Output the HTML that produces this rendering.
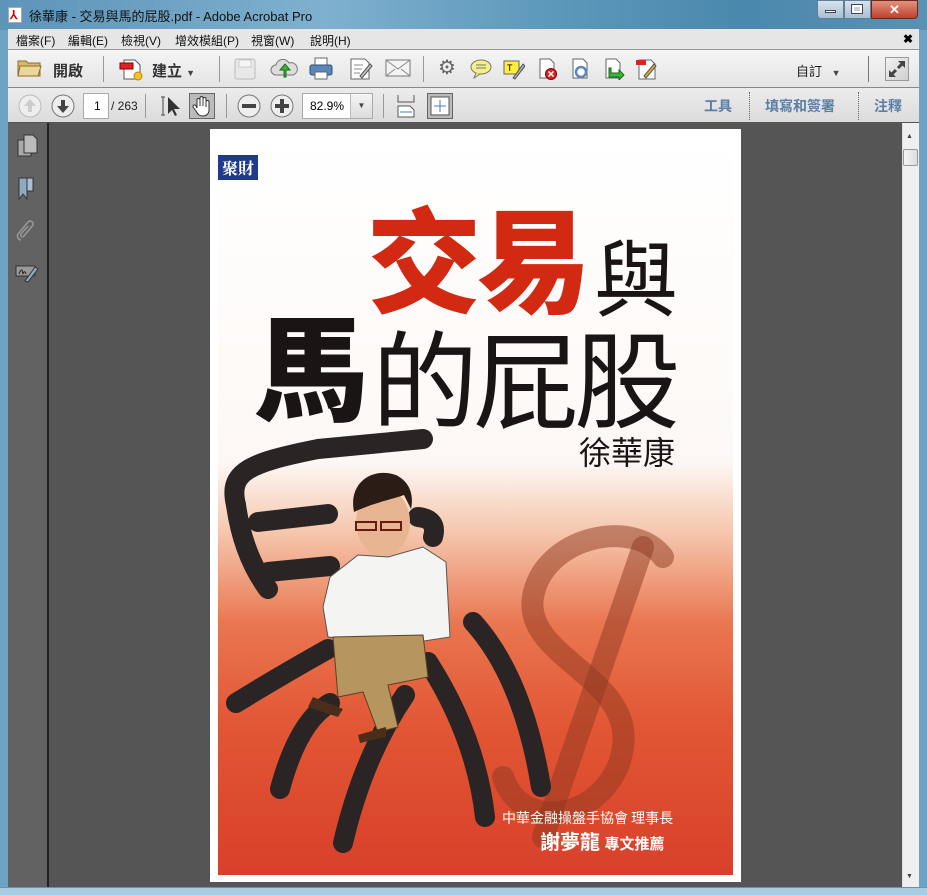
<!DOCTYPE html>
<html><head><meta charset="utf-8">
<style>
*{margin:0;padding:0;box-sizing:border-box}
body{width:927px;height:895px;overflow:hidden;background:#6fa3c4;font-family:"Liberation Sans","Noto Sans CJK TC",sans-serif;position:relative}
.a{position:absolute}
.cj{font-family:"Noto Sans CJK TC",sans-serif;line-height:1;white-space:nowrap}
</style></head><body>
<!-- title bar -->
<div class="a" style="left:0;top:0;width:927px;height:30px;background:linear-gradient(90deg,#5d94b8 0%,#7fb0cf 35%,#5c98ba 60%,#4b88ad 80%,#5a91b3 100%)"></div>
<div class="a" style="left:8px;top:7px;width:14px;height:16px;background:#fff;border:1px solid #aaa"></div>
<div class="a" style="left:10px;top:9px;color:#c00;font-size:12px;font-weight:bold;line-height:12px">⅄</div>
<div class="a" style="left:29px;top:6px;font-size:13px;color:#111">徐華康 - 交易與馬的屁股.pdf - Adobe Acrobat Pro</div>
<div class="a" style="left:817px;top:0;width:27px;height:19px;background:linear-gradient(#d8e4ee,#a9bfd1);border:1px solid #5f7f99;border-radius:0 0 0 4px"></div>
<div class="a" style="left:825px;top:10px;width:11px;height:3px;background:#fff;border:1px solid #445"></div>
<div class="a" style="left:844px;top:0;width:27px;height:19px;background:linear-gradient(#d8e4ee,#a9bfd1);border:1px solid #5f7f99"></div>
<div class="a" style="left:852px;top:5px;width:10px;height:8px;border:2px solid #fff;outline:1px solid #445"></div>
<div class="a" style="left:871px;top:0;width:47px;height:19px;background:linear-gradient(#e0937f,#c0402a);border:1px solid #6a2a20;border-radius:0 0 4px 0;color:#fff;font-size:13px;font-weight:bold;text-align:center;line-height:17px">✕</div>
<!-- menu -->
<div class="a" style="left:8px;top:29px;width:911px;height:21px;background:#e6e6e6;border-bottom:1px solid #999"></div>
<div class="a" style="left:16px;top:32px;font-size:12px;color:#111">檔案(F)</div>
<div class="a" style="left:68px;top:32px;font-size:12px;color:#111">編輯(E)</div>
<div class="a" style="left:121px;top:32px;font-size:12px;color:#111">檢視(V)</div>
<div class="a" style="left:175px;top:32px;font-size:12px;color:#111">增效模組(P)</div>
<div class="a" style="left:251px;top:32px;font-size:12px;color:#111">視窗(W)</div>
<div class="a" style="left:310px;top:32px;font-size:12px;color:#111">說明(H)</div>
<div class="a" style="left:903px;top:32px;font-size:12px;font-weight:bold;color:#000">✖</div>
<!-- toolbar 1 -->
<div class="a" style="left:8px;top:50px;width:911px;height:38px;background:linear-gradient(#f5f5f5,#e4e4e4);border-bottom:1px solid #888"></div>
<svg class="a" style="left:17px;top:58px" width="26" height="20"><path d="M1 3h8l2 2h12v13H1z" fill="#d9b970" stroke="#8a6c2c"/><path d="M3 8h21l-3 10H1z" fill="#ecd79a" stroke="#8a6c2c"/></svg>
<div class="a" style="left:53px;top:60px;font-size:15px;font-weight:bold;color:#333">開啟</div>
<div class="a" style="left:103px;top:56px;width:1px;height:26px;background:#999"></div>
<svg class="a" style="left:119px;top:57px" width="26" height="24"><path d="M5 3h11l5 5v14H5z" fill="#fff" stroke="#555"/><rect x="1" y="6" width="13" height="6" fill="#d22" stroke="#800"/><circle cx="19" cy="19" r="4" fill="#f5c02a" stroke="#b80"/></svg>
<div class="a" style="left:152px;top:60px;font-size:15px;font-weight:bold;color:#333">建立 <span style="font-size:9px;color:#444">▼</span></div>
<div class="a" style="left:219px;top:56px;width:1px;height:26px;background:#999"></div>
<svg class="a" style="left:233px;top:57px" width="24" height="24"><rect x="2" y="2" width="20" height="20" rx="2" fill="#e8e8e8" stroke="#bbb"/><rect x="6" y="3" width="12" height="7" fill="#f6f6f6" stroke="#ccc"/></svg>
<svg class="a" style="left:270px;top:56px" width="28" height="24"><path d="M6 19a5 5 0 0 1 0-10a7 7 0 0 1 13-2a5 5 0 0 1 4 12z" fill="#ddd" stroke="#777"/><path d="M14 21v-7h-4l5-6 5 6h-4v7z" fill="#3cb63c" stroke="#186a18"/></svg>
<svg class="a" style="left:308px;top:56px" width="26" height="25"><rect x="7" y="2" width="12" height="8" fill="#fff" stroke="#666"/><rect x="2" y="9" width="22" height="10" rx="2" fill="#5a87b8" stroke="#2f4f73"/><rect x="7" y="16" width="12" height="7" fill="#fff" stroke="#666"/></svg>
<svg class="a" style="left:348px;top:56px" width="26" height="25"><path d="M3 3h14l4 4v16H3z" fill="#fff" stroke="#666"/><path d="M6 9h9M6 13h8M6 17h6" stroke="#888"/><path d="M12 20l10-12 2 2-10 12z" fill="#cbb" stroke="#555"/></svg>
<svg class="a" style="left:385px;top:59px" width="26" height="19"><rect x="1" y="1" width="24" height="16" fill="#f4f4f4" stroke="#777"/><path d="M1 1l12 9 12-9M1 17l9-7M25 17l-9-7" fill="none" stroke="#888"/></svg>
<div class="a" style="left:423px;top:56px;width:1px;height:26px;background:#999"></div>
<div class="a" style="left:438px;top:58px;font-size:20px;color:#666;line-height:20px">⚙</div>
<svg class="a" style="left:470px;top:59px" width="22" height="20"><ellipse cx="11" cy="8" rx="10" ry="7" fill="#f6f08a" stroke="#776"/><path d="M6 14l-2 5 6-4" fill="#f6f08a" stroke="#776"/><path d="M6 6h10M6 9h10" stroke="#776"/></svg>
<svg class="a" style="left:503px;top:58px" width="22" height="22"><rect x="1" y="3" width="15" height="13" fill="#ffef3a" stroke="#666"/><text x="4" y="13" font-size="9" font-family="Liberation Sans">T</text><path d="M10 20l10-14 2 2-10 13z" fill="#aaa" stroke="#555"/></svg>
<svg class="a" style="left:537px;top:58px" width="22" height="22"><path d="M3 1h10l4 4v15H3z" fill="#fff" stroke="#666"/><circle cx="14" cy="16" r="5.5" fill="#d22" stroke="#800"/><path d="M11.5 13.5l5 5M16.5 13.5l-5 5" stroke="#fff" stroke-width="1.5"/></svg>
<svg class="a" style="left:570px;top:58px" width="22" height="22"><path d="M3 1h10l4 4v15H3z" fill="#fff" stroke="#666"/><circle cx="11" cy="14" r="5" fill="none" stroke="#5a87b8" stroke-width="2.5"/></svg>
<svg class="a" style="left:603px;top:58px" width="24" height="22"><path d="M3 1h10l4 4v15H3z" fill="#fff" stroke="#666"/><path d="M8 10v5h8v-3l5 5-5 5v-3H6v-9z" fill="#3cb63c" stroke="#186a18"/></svg>
<svg class="a" style="left:635px;top:57px" width="24" height="23"><path d="M4 3h12l4 4v15H4z" fill="#fff" stroke="#666"/><rect x="1" y="3" width="10" height="5" fill="#d22"/><path d="M9 19l10-12 2 2-10 12z" fill="#e9a63a" stroke="#555"/></svg>
<div class="a" style="left:796px;top:61px;font-size:13px;color:#222">自訂 <span style="font-size:9px;color:#444;margin-left:6px">▼</span></div>
<div class="a" style="left:868px;top:56px;width:1px;height:26px;background:#777"></div>
<div class="a" style="left:885px;top:57px;width:24px;height:24px;border:1px solid #999;background:linear-gradient(135deg,#f2f2f2,#cfcfcf)"></div>
<svg class="a" style="left:885px;top:57px" width="24" height="24"><path d="M5 19l6-6M19 5l-6 6" stroke="#444" stroke-width="3"/><path d="M4 20v-7l7 7zM20 4v7l-7-7z" fill="#444"/></svg>
<!-- toolbar 2 -->
<div class="a" style="left:8px;top:88px;width:911px;height:35px;background:linear-gradient(#ececec,#dcdcdc);border-bottom:1px solid #555"></div>
<svg class="a" style="left:17px;top:93px" width="26" height="26"><circle cx="13" cy="13" r="11" fill="#eee" stroke="#bbb"/><path d="M13 6l6 7h-4v6h-4v-6H7z" fill="#ccc"/></svg>
<svg class="a" style="left:50px;top:93px" width="26" height="26"><circle cx="13" cy="13" r="11" fill="#eee" stroke="#777"/><path d="M13 20l6-7h-4V7h-4v6H7z" fill="#444"/></svg>
<div class="a" style="left:83px;top:93px;width:26px;height:26px;background:#fff;border:1px solid #aaa;font-size:12px;line-height:24px;padding-left:10px">1</div>
<div class="a" style="left:111px;top:99px;font-size:12px;color:#222">/ 263</div>
<div class="a" style="left:145px;top:94px;width:1px;height:24px;background:#999"></div>
<svg class="a" style="left:160px;top:94px" width="24" height="24"><path d="M3 3v18M1 3h4M1 21h4" stroke="#444"/><path d="M8 3v17l4-4 3 6 2-1-3-6h6z" fill="#333"/></svg>
<div class="a" style="left:189px;top:93px;width:26px;height:26px;background:#bbb;border:1px solid #666"></div>
<svg class="a" style="left:190px;top:94px" width="24" height="24"><path d="M7 14V6a1.5 1.5 0 0 1 3 0v6V4a1.5 1.5 0 0 1 3 0v8V5a1.5 1.5 0 0 1 3 0v8V8a1.5 1.5 0 0 1 3 0v8c0 4-3 6-6 6s-5-1-7-5l-3-4a1.5 1.5 0 0 1 3-1z" fill="#fff" stroke="#333"/></svg>
<div class="a" style="left:226px;top:94px;width:1px;height:24px;background:#999"></div>
<svg class="a" style="left:236px;top:93px" width="26" height="26"><circle cx="13" cy="13" r="11" fill="#eee" stroke="#777"/><rect x="6" y="11" width="14" height="4" fill="#444"/></svg>
<svg class="a" style="left:269px;top:93px" width="26" height="26"><circle cx="13" cy="13" r="11" fill="#eee" stroke="#777"/><path d="M6 11h5V6h4v5h5v4h-5v5h-4v-5H6z" fill="#444"/></svg>
<div class="a" style="left:302px;top:93px;width:71px;height:26px;background:#fff;border:1px solid #aaa;font-size:12px;line-height:24px;padding-left:7px">82.9%</div>
<div class="a" style="left:350px;top:94px;width:22px;height:24px;background:linear-gradient(#f5f5f5,#ddd);border-left:1px solid #bbb;font-size:8px;text-align:center;line-height:24px;color:#444">▼</div>
<div class="a" style="left:383px;top:94px;width:1px;height:24px;background:#999"></div>
<svg class="a" style="left:396px;top:94px" width="20" height="24"><path d="M2 1v7h16V1" fill="none" stroke="#555"/><path d="M2 12h12l4 4v7H2z" fill="#fff" stroke="#555"/><path d="M4 18h12" stroke="#4a7cc0"/></svg>
<div class="a" style="left:427px;top:93px;width:26px;height:26px;background:#bbb;border:1px solid #666"></div>
<svg class="a" style="left:430px;top:96px" width="20" height="20"><rect x="1" y="1" width="18" height="18" fill="#fff" stroke="#555"/><path d="M10 4v12M4 10h12" stroke="#4a7cc0"/></svg>
<div class="a" style="left:704px;top:96px;font-size:14px;font-weight:bold;color:#5a7ea6">工具</div>
<div class="a" style="left:749px;top:92px;height:28px;border-left:1px dotted #666"></div>
<div class="a" style="left:765px;top:96px;font-size:14px;font-weight:bold;color:#5a7ea6">填寫和簽署</div>
<div class="a" style="left:858px;top:92px;height:28px;border-left:1px dotted #666"></div>
<div class="a" style="left:874px;top:96px;font-size:14px;font-weight:bold;color:#5a7ea6">注釋</div>
<!-- workspace -->
<div class="a" style="left:8px;top:123px;width:911px;height:764px;background:#555"></div>
<div class="a" style="left:8px;top:123px;width:41px;height:764px;background:#626262;border-right:2px solid #222"></div>
<svg class="a" style="left:16px;top:133px" width="24" height="26"><rect x="2" y="7" width="13" height="16" fill="#aaa" stroke="#333"/><path d="M8 2h9l4 4v14H8z" fill="#bbb" stroke="#333"/></svg>
<svg class="a" style="left:17px;top:176px" width="20" height="26"><path d="M2 2h8v21l-4-5-4 5z" fill="#8ea9c2" stroke="#333"/><path d="M10 2h6v13h-6z" fill="#a9bfd3" stroke="#333"/></svg>
<svg class="a" style="left:15px;top:218px" width="24" height="26"><path d="M6 22a4 4 0 0 1-3-6L13 4a3 3 0 0 1 5 3L9 18a1.5 1.5 0 0 1-3-2l7-8" fill="none" stroke="#999" stroke-width="1.5"/></svg>
<svg class="a" style="left:15px;top:264px" width="24" height="20"><rect x="1" y="2" width="19" height="10" fill="#999" stroke="#333"/><path d="M4 10c2-5 3-6 4 0 1-3 2-3 3 0" fill="none" stroke="#222"/><path d="M10 17l10-14 3 2-10 13z" fill="#8ea9c2" stroke="#333"/></svg>
<!-- scrollbar -->
<div class="a" style="left:902px;top:123px;width:17px;height:764px;background:#efefef;border-left:1px solid #ddd"></div>
<div class="a" style="left:906px;top:133px;font-size:7px;color:#444">▲</div>
<div class="a" style="left:903px;top:149px;width:15px;height:17px;background:linear-gradient(90deg,#f4f4f4,#ddd);border:1px solid #999;border-radius:2px"></div>
<div class="a" style="left:906px;top:873px;font-size:7px;color:#444">▼</div>
<div class="a" style="left:0;top:887px;width:927px;height:8px;background:#a9cbe2;border-top:1px solid #6a8fb0"></div>
<!-- page -->
<div class="a" style="left:210px;top:129px;width:531px;height:753px;background:#fff"></div>
<svg class="a" style="left:218px;top:137px" width="515" height="738" viewBox="0 0 515 738">
<defs>
<linearGradient id="bg" x1="0" y1="0" x2="0" y2="1">
<stop offset="0" stop-color="#fff"/><stop offset="0.44" stop-color="#fdf8f5"/><stop offset="0.54" stop-color="#f5c4aa"/><stop offset="0.66" stop-color="#e97650"/><stop offset="0.8" stop-color="#e25634"/><stop offset="1" stop-color="#d8402a"/>
</linearGradient>
</defs>
<rect width="515" height="738" fill="url(#bg)"/>
<g fill="none" stroke="#8e3820" stroke-opacity="0.5" stroke-width="22" stroke-linecap="round" transform="translate(15,140)">
<path d="M430 280C400 240 310 260 300 320C290 380 400 400 390 470C380 540 290 560 270 500"/>
<path d="M410 270L310 560"/>
</g>
<g fill="none" stroke="#2a2424" stroke-width="20" stroke-linecap="round" stroke-linejoin="round">
<path d="M18 368C10 335 30 326 100 312L205 302"/>
<path d="M18 368Q25 418 50 452"/>
<path d="M40 385L110 377M50 435L112 429"/>
<path d="M18 566Q60 540 110 512"/>
<path d="M200 380Q220 382 215 400"/>
<path d="M62 652Q80 585 112 566"/>
<path d="M125 706Q145 620 187 558"/>
<path d="M267 680Q258 600 210 525"/>
<path d="M323 650Q305 540 255 485"/>
</g>
<path d="M112 440L140 418L170 420L205 410L228 425L232 500L180 508L110 500L105 470Z" fill="#f4f4f2" stroke="#555"/>
<path d="M115 500L205 498L210 540L170 548L180 590L160 595L145 555L120 560Z" fill="#b6955f" stroke="#5a4222"/>
<path d="M95 560L125 572L120 580L90 570ZM140 598L168 590L168 600L142 606Z" fill="#4a2d1a"/>
<ellipse cx="165" cy="385" rx="27" ry="34" fill="#e8b593"/>
<path d="M136 375C130 345 155 330 178 338C192 345 196 358 193 372L186 358C175 362 155 366 136 375Z" fill="#2b1d15"/>
<path d="M138 385h20v8h-20zM163 385h20v8h-20z" fill="none" stroke="#6a1a10" stroke-width="2"/>
</svg>
<div class="a" style="left:218px;top:155px;width:40px;height:25px;background:#1f3a8c;color:#fff;font-family:'Noto Serif CJK SC',serif;font-weight:bold;font-size:16px;line-height:25px;text-align:center">聚財</div>
<div class="a cj" style="left:367px;top:198px;font-size:114px;font-weight:900;color:#d22a12;letter-spacing:-4px">交易</div>
<div class="a cj" style="left:594px;top:233px;font-size:84px;color:#1a1414">與</div>
<div class="a cj" style="left:254px;top:306px;font-size:114px;font-weight:900;color:#1a1414">馬</div>
<div class="a cj" style="left:372px;top:321px;font-size:106px;color:#1a1414;letter-spacing:-5px">的屁股</div>
<div class="a cj" style="left:579px;top:435px;font-size:32px;color:#1a1414">徐華康</div>
<div class="a cj" style="left:502px;top:811px;font-size:14px;color:#fff">中華金融操盤手協會 理事長</div>
<div class="a cj" style="left:540px;top:831px;font-size:20px;font-weight:bold;color:#fff">謝夢龍 <span style="font-size:15px">專文推薦</span></div>
</body></html>
